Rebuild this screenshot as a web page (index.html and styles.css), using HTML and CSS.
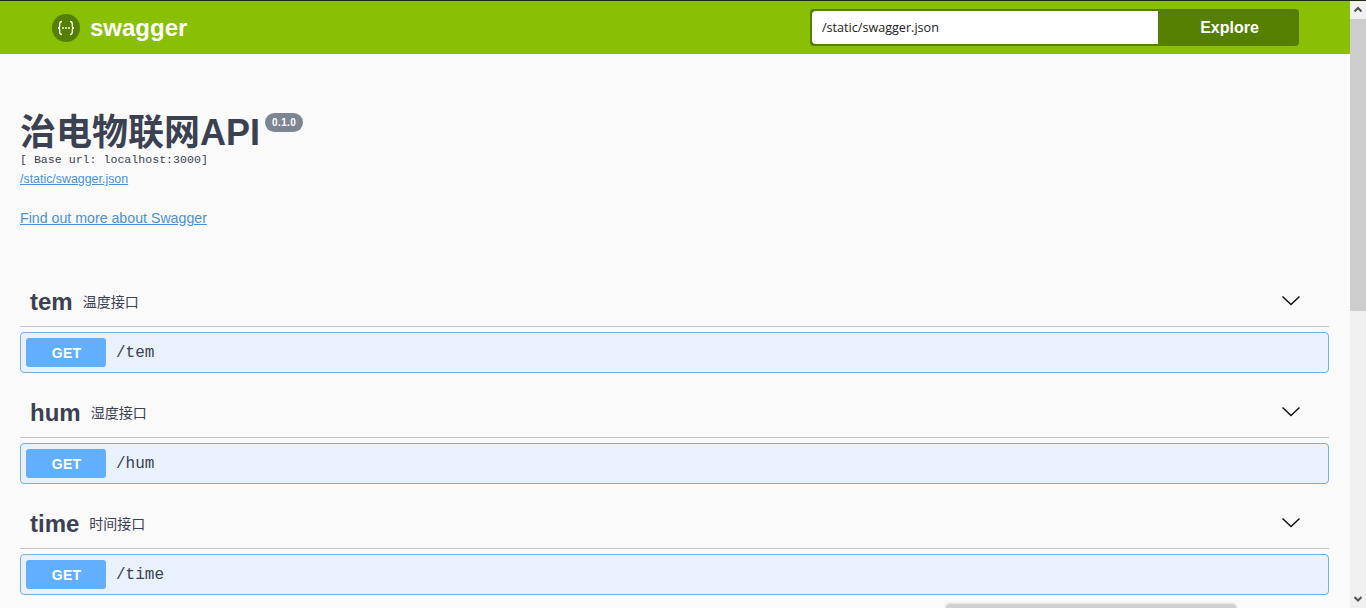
FILE: index.html
```html
<!DOCTYPE html>
<html lang="zh">
<head>
<meta charset="utf-8">
<title>Swagger UI</title>
<link rel="stylesheet" href="styles.css">
</head>
<body>
<div class="viewport">
  <main class="page">
    <header class="topbar">
      <div class="brand">
        <svg class="logo" viewBox="0 0 28 28" width="28" height="28" aria-hidden="true">
          <circle cx="14" cy="14" r="14" fill="#547f00"/>
          <path d="M10 7.500c-2 0-2.300 1-2.300 2.500v2.300c0 1-.6 1.700-1.700 1.700 1.100 0 1.700.7 1.700 1.700V18c0 1.500.3 2.500 2.300 2.500M18 7.500c2 0 2.300 1 2.300 2.500v2.300c0 1 .6 1.700 1.700 1.700-1.100 0-1.700.7-1.700 1.700V18c0 1.500-.3 2.500-2.300 2.500" fill="none" stroke="#fff" stroke-width="1.300"/>
          <circle cx="11" cy="14" r=".9" fill="#fff"/><circle cx="14" cy="14" r=".9" fill="#fff"/><circle cx="17" cy="14" r=".9" fill="#fff"/>
        </svg>
        <span class="brand-name">swagger</span>
      </div>
      <form class="explore">
        <input class="explore-input" type="text" value="/static/swagger.json">
        <span class="explore-btn">Explore</span>
      </form>
    </header>
    <section class="info">
      <h1 class="title">治电物联网API<span class="version">0.1.0</span></h1>
      <p class="base-url">[ Base url: localhost:3000]</p>
      <a class="spec-link" href="#">/static/swagger.json</a>
      <a class="more-link" href="#">Find out more about Swagger</a>
    </section>
    <section class="tag">
      <div class="tag-head"><h4 class="tag-name">tem</h4><small class="tag-desc">温度接口</small>
        <svg class="chev" viewBox="0 0 20 20" width="20" height="20" aria-hidden="true"><path d="M1.500 5.500 10 13.500l8.500-8" fill="none" stroke="#111" stroke-width="1.500"/></svg></div>
      <div class="op"><span class="method">GET</span><span class="path">/tem</span></div>
    </section>
    <section class="tag">
      <div class="tag-head"><h4 class="tag-name">hum</h4><small class="tag-desc">湿度接口</small>
        <svg class="chev" viewBox="0 0 20 20" width="20" height="20" aria-hidden="true"><path d="M1.500 5.500 10 13.500l8.500-8" fill="none" stroke="#111" stroke-width="1.500"/></svg></div>
      <div class="op"><span class="method">GET</span><span class="path">/hum</span></div>
    </section>
    <section class="tag">
      <div class="tag-head"><h4 class="tag-name">time</h4><small class="tag-desc">时间接口</small>
        <svg class="chev" viewBox="0 0 20 20" width="20" height="20" aria-hidden="true"><path d="M1.500 5.500 10 13.500l8.500-8" fill="none" stroke="#111" stroke-width="1.500"/></svg></div>
      <div class="op"><span class="method">GET</span><span class="path">/time</span></div>
    </section>
    <div class="peek"></div>
  </main>
  <aside class="scrollbar" aria-hidden="true">
    <svg class="sb-arrow" viewBox="0 0 16 18" width="16" height="18"><path d="M4.500 10.500 8 7l3.500 3.500" fill="none" stroke="#505050" stroke-width="2"/></svg>
    <div class="sb-track"><div class="sb-thumb"></div></div>
    <svg class="sb-arrow" viewBox="0 0 16 18" width="16" height="18"><path d="M4.500 7 8 10.500 11.500 7" fill="none" stroke="#505050" stroke-width="2"/></svg>
  </aside>
</div>
</body>
</html>
```
FILE: styles.css
```css
* { box-sizing: border-box; }
html, body { margin: 0; height: 100%; overflow: hidden; }
body { background: #fafafa; color: #3b4151; font-family: "Liberation Sans", "Noto Sans CJK SC", sans-serif; }
.viewport { display: flex; height: 608px; border-top: 1px solid #1f2a14; }
.page { position: relative; flex: 1; min-width: 0; overflow: hidden; background: #fafafa; }

.topbar { display: flex; align-items: center; justify-content: space-between; height: 53px; padding: 0 51px 0 52px; background: #89bf04; }
.brand { display: flex; align-items: center; gap: 10px; }
.logo { display: block; }
.brand-name { color: #fff; font-size: 24px; font-weight: 700; line-height: 28px; }
.explore { display: flex; width: 489px; height: 37px; margin: 0; border: 2px solid #547f00; border-radius: 4px; background: #547f00; }
.explore-input { width: 346px; height: 33px; padding: 0 10px; border: 0; border-radius: 4px 0 0 4px; outline: 0; background: #fff; color: #222; font-family: "Open Sans", sans-serif; font-size: 12.600px; }
.explore-btn { flex: 1; padding-left: 4px; color: #fff; font-size: 16px; font-weight: 700; line-height: 33px; text-align: center; }

.info { padding: 58px 20px 52px; }
.title { display: flex; align-items: flex-start; margin: 0; height: 41px; color: #3b4151; font-size: 36px; font-weight: 700; line-height: 42px; }
.version { height: 19px; margin: 1px 0 0 5px; padding: 0 7px; border-radius: 10px; background: #7d8492; color: #fff; font-size: 10px; line-height: 19px; letter-spacing: .4px; }
.base-url { margin: 0; font-family: "Liberation Mono", monospace; font-size: 11.600px; line-height: 14px; color: #3b4151; }
.spec-link, .more-link { display: block; color: #4a90d9; }
.spec-link { margin-top: 5px; font-size: 12.400px; line-height: 14px; }
.more-link { margin-top: 24px; font-size: 14.200px; line-height: 16px; }

.tag { padding: 0 21px 0 20px; }
.tag-head { display: flex; align-items: center; height: 49px; border-bottom: 1px solid #c4c4c4; padding: 0 28px 2px 10px; }
.tag-name { margin: 0; color: #3b4151; font-size: 24px; font-weight: 700; line-height: 47px; }
.tag-desc { margin-left: 10px; color: #3b4151; font-family: "Noto Sans CJK SC", sans-serif; font-size: 14px; }
.chev { margin-left: auto; }
.op { display: flex; align-items: center; height: 41px; margin-top: 5px; margin-bottom: 16px; padding: 0 5px; border: 1px solid #78aee6; border-radius: 4px; background: #e9f2fc; }
.method { width: 80px; height: 29px; padding-left: 1px; border-radius: 3px; background: #61affe; color: #fff; font-size: 14px; font-weight: 700; line-height: 31px; letter-spacing: .2px; text-align: center; }
.path { margin-left: 10px; color: #3b4151; font-family: "Liberation Mono", monospace; font-size: 16px; font-weight: 400; }

.peek { position: absolute; left: 946px; top: 604px; width: 290px; height: 8px; border-radius: 4px 4px 0 0; background: #d0d0d0; box-shadow: 0 -1px 3px rgba(0,0,0,.25); }

.scrollbar { display: flex; flex-direction: column; flex: 0 0 16px; background: #f0f0f0; }
.sb-arrow { display: block; flex: none; }
.sb-track { flex: 1; }
.sb-thumb { height: 292px; background: #cdcdcd; }
```
